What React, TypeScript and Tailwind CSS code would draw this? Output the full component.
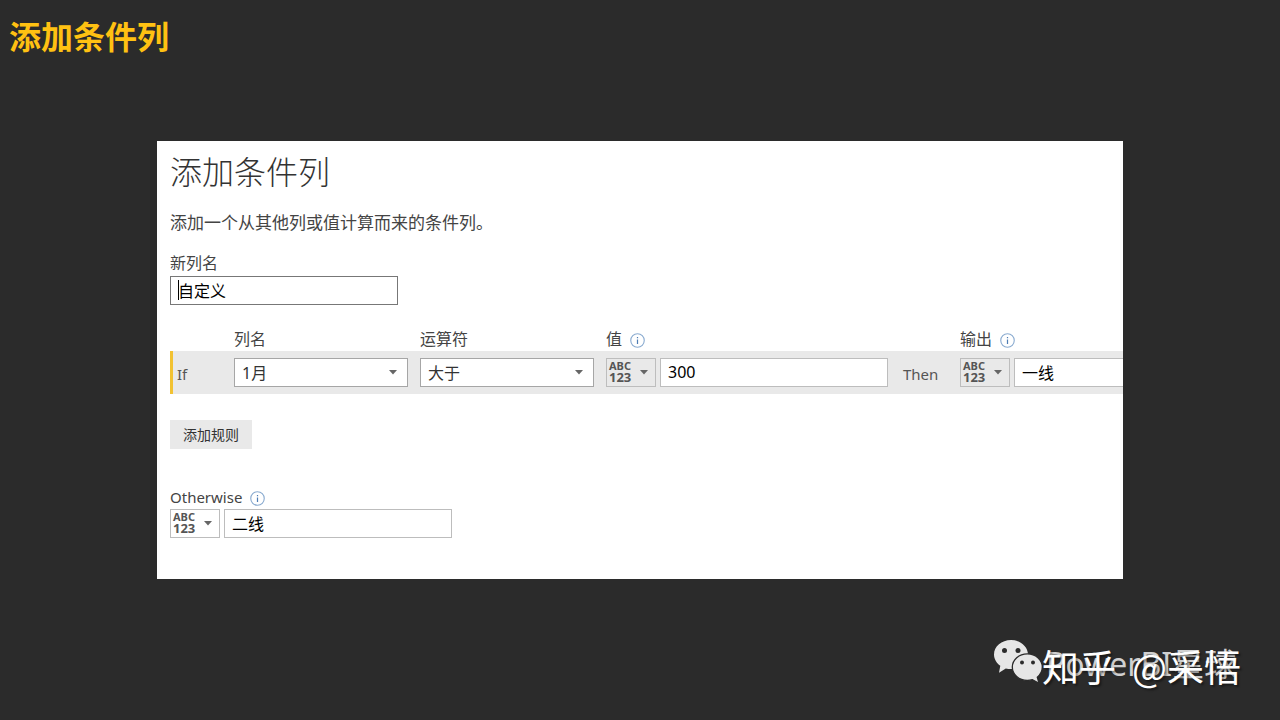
import type { ReactNode } from "react";

const ruleGrid =
  "grid grid-cols-[52px_174px_174px_281px_49px_281px] gap-x-3";

function Caret() {
  return (
    <svg viewBox="0 0 8 5" className="h-[5px] w-2 fill-[#666]" aria-hidden="true">
      <path d="M0 0h8L4 4.5z" />
    </svg>
  );
}

function InfoIcon() {
  return (
    <svg viewBox="0 0 16 16" className="mt-0.5 size-[15px]" fill="none" aria-hidden="true">
      <circle cx="8" cy="8" r="7.2" stroke="#8aabd0" strokeWidth="1.2" />
      <path d="M8 7v4.6M8 4.2v1.5" stroke="#4f7db5" strokeWidth="1.3" />
    </svg>
  );
}

function Label({ htmlFor, info, children }: { htmlFor: string; info?: boolean; children: ReactNode }) {
  return (
    <label htmlFor={htmlFor} className="flex h-6 items-center gap-2 text-[#444]">
      {children}
      {info && <InfoIcon />}
    </label>
  );
}

function Select({ id, options }: { id: string; options: string[] }) {
  return (
    <div className="relative">
      <select
        id={id}
        className="block h-[29px] w-full appearance-none border border-[#a6a6a6] bg-white px-[7px] text-base text-[#333] outline-none"
      >
        {options.map((option) => (
          <option key={option}>{option}</option>
        ))}
      </select>
      <div className="pointer-events-none absolute inset-y-0 right-[11px] flex items-center">
        <Caret />
      </div>
    </div>
  );
}

function TypedInput({ id, value, muted }: { id: string; value: string; muted?: boolean }) {
  return (
    <div className="flex gap-1">
      <button
        type="button"
        aria-label="ABC 123"
        className={`flex h-[29px] w-[50px] shrink-0 items-center justify-between border border-[#bdbdbd] pr-[7px] pl-[2px] ${
          muted ? "bg-[#e9e9e9]" : "bg-white"
        }`}
      >
        <span className="flex flex-col pb-0.5 text-left font-bold text-[#555]">
          <span className="text-[11px] leading-[11px]">ABC</span>
          <span className="text-[13px] leading-[12px]">123</span>
        </span>
        <Caret />
      </button>
      <input
        id={id}
        defaultValue={value}
        className="h-[29px] w-[228px] shrink-0 border border-[#bdbdbd] bg-white px-[7px] pb-0.5 text-base text-black outline-none"
      />
    </div>
  );
}

function WechatIcon() {
  return (
    <svg viewBox="0 0 48 43" className="h-[43px] w-12" aria-hidden="true">
      <path
        fill="#e6e6e6"
        d="M17 0C7.600 0 0 6.400 0 14.500c0 4.600 2.500 8.500 6.300 11.200L5 32.800l6.800-4.300c1.700.4 3.400.6 5.200.6 9.400 0 17-6.500 17-14.600S26.400 0 17 0z"
      />
      <path
        fill="#e6e6e6"
        stroke="#2b2b2b"
        strokeWidth="1.300"
        d="M33.300 13.800c-8.300 0-15 5.900-15 13.300s6.700 13.400 15 13.400c1.800 0 3.500-.3 5.100-.8l6.600 3.500-1.700-6c3.100-2.500 5-6 5-10.100 0-7.400-6.700-13.300-15-13.300z"
      />
      <g fill="#2b2b2b">
        <circle cx="10.500" cy="10.500" r="2.500" />
        <circle cx="24" cy="10.500" r="2.500" />
        <circle cx="28" cy="22.500" r="2" />
        <circle cx="39" cy="22.500" r="2" />
      </g>
    </svg>
  );
}

export default function App() {
  return (
    <div className="flex min-h-screen flex-col bg-[#2b2b2b] font-['Noto_Sans','Noto_Sans_CJK_SC',sans-serif]">
      <header className="px-[9px] pt-[15px]">
        <h1 className="font-['Noto_Sans_CJK_SC',sans-serif] text-[32px] leading-10 font-bold text-[#ffc112]">
          添加条件列
        </h1>
      </header>

      <main className="mt-[86px] px-[157px]">
        <form className="overflow-hidden bg-white pt-2 pb-[41px] pl-[13px] text-base">
          <h2 className="font-['Noto_Sans_CJK_SC',sans-serif] text-[32px] leading-[42px] font-light text-[#333]">
            添加条件列
          </h2>
          <p className="mt-5 text-[17px] leading-6 text-[#444]">添加一个从其他列或值计算而来的条件列。</p>

          <div className="mt-4">
            <Label htmlFor="name">新列名</Label>
            <div className="relative mt-px w-[228px]">
              <input
                id="name"
                defaultValue="自定义"
                className="block h-[29px] w-full border border-[#777] bg-white px-[7px] pb-0.5 text-base text-black outline-none"
              />
              <span className="absolute top-1 left-2 h-5 w-px bg-black" />
            </div>
          </div>

          <div className={`mt-[22px] ${ruleGrid}`}>
            <span />
            <Label htmlFor="column">列名</Label>
            <Label htmlFor="operator">运算符</Label>
            <Label htmlFor="value" info>值</Label>
            <span />
            <Label htmlFor="output" info>输出</Label>
          </div>
          <div className="relative bg-[#e9e9e9] py-[7px]">
            <span className="absolute inset-y-0 left-0 w-[3px] bg-[#f2c232]" />
            <div className={`items-center ${ruleGrid}`}>
              <span className="pt-1 pl-[7px] text-[15px] text-[#555]">If</span>
              <Select id="column" options={["1月", "2月", "3月"]} />
              <Select id="operator" options={["大于", "等于", "小于"]} />
              <TypedInput id="value" value="300" muted />
              <span className="pt-1 pl-1 text-[15px] text-[#555]">Then</span>
              <TypedInput id="output" value="一线" muted />
            </div>
          </div>

          <button type="button" className="mt-[26px] block h-[29px] bg-[#e9e9e9] px-[13px] text-sm text-[#333]">
            添加规则
          </button>

          <div className="mt-9 text-[15px]">
            <Label htmlFor="otherwise" info>Otherwise</Label>
            <TypedInput id="otherwise" value="二线" />
          </div>
        </form>
      </main>

      <footer className="mt-[61px] flex justify-end pr-[34px]">
        <WechatIcon />
        <div className="relative h-[50px] w-[204px] whitespace-nowrap">
          <span className="absolute top-1 left-1 text-[32px] leading-10 text-[#d0d0d0]">PowerBI星球</span>
          <div className="absolute top-1 left-0 flex gap-4 font-['Noto_Sans_CJK_SC',sans-serif] text-[37px] leading-[44px] text-white [text-shadow:2px_2px_2px_#0006]">
            <span>知乎</span>
            <span>@采悟</span>
          </div>
        </div>
      </footer>
    </div>
  );
}
